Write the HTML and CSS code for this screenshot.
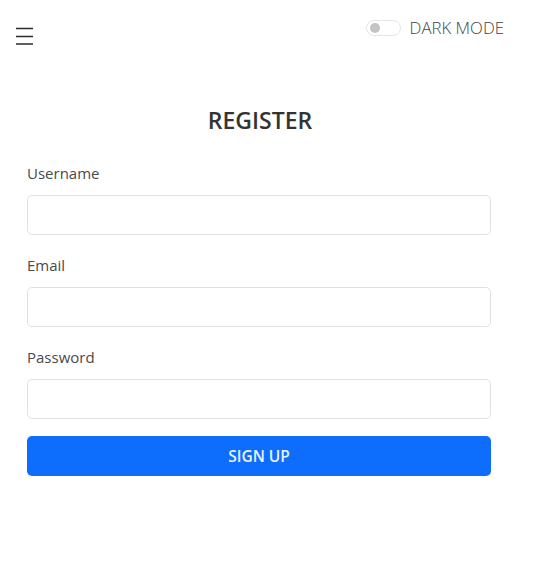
FILE: index.html
```html
<!DOCTYPE html>
<html>
<head>
<meta charset="utf-8">
<link rel="stylesheet" href="styles.css">
</head>
<body>
<header class="topbar">
  <button class="menu-btn" aria-label="Menu">
    <svg width="18" height="18" viewBox="0 0 18 18"><path d="M0 1.5H17M0 9.5H17M0 17H17" stroke="#2b2b2b" stroke-width="1.6" fill="none"/></svg>
  </button>
  <label class="dark-toggle">
    <span class="switch"><span class="knob"></span></span>
    <span class="dark-label">DARK MODE</span>
  </label>
</header>
<main class="register">
  <h1 class="title">REGISTER</h1>
  <form class="form">
    <div class="field">
      <label class="field-label">Username</label>
      <input class="input" type="text">
    </div>
    <div class="field">
      <label class="field-label">Email</label>
      <input class="input" type="email">
    </div>
    <div class="field">
      <label class="field-label">Password</label>
      <input class="input" type="password">
    </div>
    <button class="submit" type="button">SIGN UP</button>
  </form>
</main>
</body>
</html>
```
FILE: styles.css
```css
* { box-sizing: border-box; }
html, body { margin: 0; padding: 0; background: #ffffff; }
body {
  font-family: "Open Sans", "Noto Sans", sans-serif;
  color: #333;
  width: 547px;
  height: 579px;
}
.topbar {
  display: flex;
  justify-content: space-between;
  align-items: flex-start;
  padding: 18px 43px 0 16px;
  height: 105px;
}
.menu-btn {
  border: none;
  background: none;
  padding: 0;
  margin-top: 9px;
  width: 18px;
  height: 18px;
  display: block;
}
.menu-btn svg { display: block; }
.dark-toggle {
  display: flex;
  align-items: center;
  gap: 9px;
}
.switch {
  width: 35px;
  height: 16px;
  border: 1px solid #e6e6e6;
  border-radius: 8px;
  display: flex;
  align-items: center;
  padding-left: 3px;
  background: #fff;
}
.knob {
  width: 10px;
  height: 10px;
  border-radius: 50%;
  background: #c4c4c4;
}
.dark-label {
  font-size: 16.8px;
  font-weight: 300;
  color: #444;
  line-height: 20px;
}
.register {
  padding: 0 56px 0 27px;
}
.title {
  margin: 0 0 26px;
  text-align: center;
  font-size: 23px;
  font-weight: 600;
  line-height: 31px;
  color: #333;
  padding-left: 2px;
}
.form {
  display: flex;
  flex-direction: column;
}
.field {
  display: flex;
  flex-direction: column;
  margin-bottom: 19px;
}
.field:last-of-type { margin-bottom: 17px; }
.field-label {
  font-size: 15px;
  line-height: 22px;
  color: #4a4a4a;
  margin-bottom: 11px;
}
.input {
  height: 40px;
  border: 1px solid #dfe2e5;
  border-radius: 5px;
  background: #fff;
  font: inherit;
}
.submit {
  height: 40px;
  border: none;
  border-radius: 5px;
  background: #0d6efd;
  color: #eaf2ff;
  font-family: "Open Sans", "Noto Sans", sans-serif;
  font-size: 15.5px;
  font-weight: 600;
}
```
